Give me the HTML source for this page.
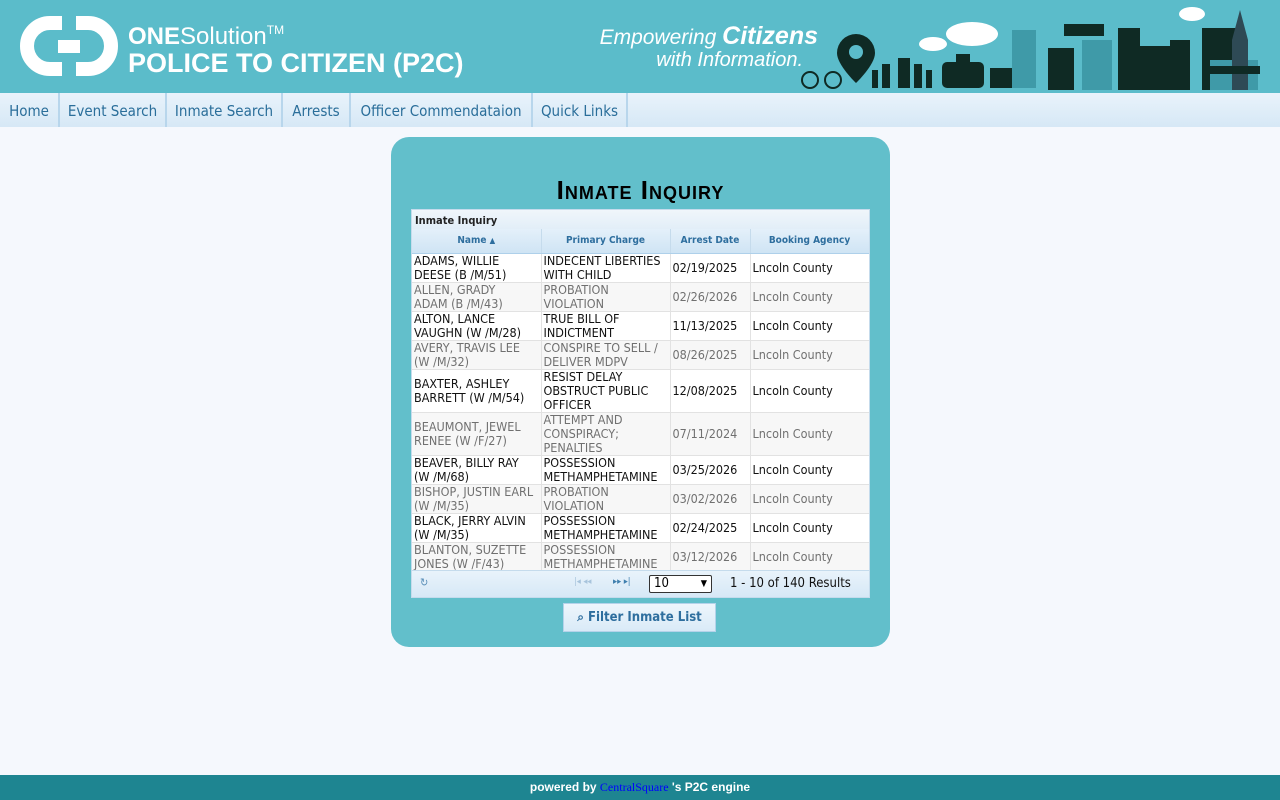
<!DOCTYPE html>
<html><head><meta charset="utf-8"><style>
*{margin:0;padding:0;box-sizing:border-box}
body{width:1280px;height:800px;background:#f5f8fd;font-family:"DejaVu Sans","Liberation Sans",sans-serif;position:relative;overflow:hidden}
#hdr{position:absolute;left:0;top:0;width:1280px;height:93px;background:#5bbcca}
#nav{position:absolute;left:0;top:93px;width:1280px;height:34px;background:linear-gradient(#e9f3fb,#d6e8f6)}
#nav span{position:absolute;top:0;height:34px;line-height:36px;font-size:15px;color:#2a6e9a;font-family:"DejaVu Sans Condensed","Liberation Sans",sans-serif;text-align:center;border-right:2px solid #b8d6ec}
#panel{position:absolute;left:391px;top:137px;width:499px;height:510px;background:#62bfcb;border-radius:18px}
h1{position:absolute;left:391px;width:499px;top:175px;text-align:center;font:bold 26px "Liberation Sans",sans-serif;font-variant:small-caps;color:#000;letter-spacing:1px}
#grid{position:absolute;left:411px;top:209px;width:459px;height:389px;background:#fff;border:1px solid #c5dbec;overflow:hidden}
#cap{height:19px;background:linear-gradient(#f0f6fb,#e2eef8);font:bold 11px "DejaVu Sans Condensed","DejaVu Sans",sans-serif;padding:4px 3px;color:#222}
table{border-collapse:collapse;width:457px;table-layout:fixed}
th{height:24px;background:linear-gradient(#e4f0fa,#cfe4f4);font:bold 10px "DejaVu Sans Condensed","DejaVu Sans",sans-serif;color:#2e6e9e;border-right:1px solid #c5dbec;border-bottom:1px solid #aed0ea}
td{font-family:"DejaVu Sans Condensed","DejaVu Sans",sans-serif;font-size:12.5px;line-height:14px;padding:0 2px;color:#111;border-right:1px solid #e2e2e2;border-bottom:1px solid #e2e2e2;vertical-align:middle;overflow:hidden;white-space:nowrap}
tr.a td{color:#707070;background:#f7f7f7}
#pg{position:absolute;left:0;top:360px;width:457px;height:27px;background:linear-gradient(#e9f3fb,#d6e8f6);border-top:1px solid #c5dbec;font-size:12.5px;font-family:"DejaVu Sans Condensed","DejaVu Sans",sans-serif}
#btn{position:absolute;left:563px;top:603px;width:153px;height:29px;background:linear-gradient(#eef6fc,#d9eaf7);border:1px solid #b5d3ea;font:bold 13px "DejaVu Sans Condensed","DejaVu Sans",sans-serif;color:#2e6e9e;line-height:27px;text-align:center}
#ft{position:absolute;left:0;top:775px;width:1280px;height:25px;background:#1e8591;color:#fff;font:bold 12px "Liberation Sans",sans-serif;text-align:center;line-height:25px}
</style></head><body>
<div id="hdr">
<svg width="1280" height="93" style="position:absolute;left:0;top:0">
<path d="M62 23 H50 A23 23 0 0 0 50 69 H62" fill="none" stroke="#fff" stroke-width="14"/>
<path d="M76 23 H88 A23 23 0 0 1 88 69 H76" fill="none" stroke="#fff" stroke-width="14"/>
<rect x="58" y="40" width="22" height="13" fill="#fff"/>
<text x="128" y="44" fill="#fff" font-family="Liberation Sans" font-size="24"><tspan font-weight="bold">ONE</tspan>Solution<tspan font-size="12" dy="-10">TM</tspan></text>
<text x="128" y="72" fill="#fff" font-family="Liberation Sans" font-weight="bold" font-size="27">POLICE TO CITIZEN (P2C)</text>
<text x="818" y="44" text-anchor="end" fill="#fff" font-family="Liberation Sans" font-style="italic" font-size="21">Empowering <tspan font-weight="bold" font-size="25">Citizens</tspan></text>
<text x="803" y="66" text-anchor="end" fill="#fff" font-family="Liberation Sans" font-style="italic" font-size="20">with Information.</text>
<g fill="#0f2a24">
<circle cx="810" cy="80" r="8" fill="none" stroke="#0f2a24" stroke-width="2"/><circle cx="833" cy="80" r="8" fill="none" stroke="#0f2a24" stroke-width="2"/>
<path d="M856 34a19 19 0 0 1 19 19c0 12-19 30-19 30s-19-18-19-30a19 19 0 0 1 19-19z"/><circle cx="856" cy="52" r="7" fill="#5bbcca"/>
<rect x="872" y="70" width="6" height="18"/><rect x="882" y="64" width="8" height="24"/><rect x="898" y="58" width="12" height="30"/><rect x="914" y="64" width="8" height="24"/><rect x="926" y="70" width="6" height="18"/>
<rect x="942" y="62" width="42" height="26" rx="5"/><rect x="956" y="54" width="14" height="8"/>
<path d="M990 88V68h30l8 10v10z"/>
<rect x="1048" y="48" width="26" height="42"/><rect x="1064" y="24" width="40" height="12"/>
<rect x="1118" y="28" width="22" height="62"/><rect x="1140" y="46" width="40" height="44"/><rect x="1170" y="40" width="20" height="50"/>
<rect x="1202" y="28" width="34" height="62"/>
</g>
<g fill="#3f9aa8"><rect x="1012" y="30" width="24" height="58"/><rect x="1082" y="40" width="30" height="50"/><rect x="1210" y="60" width="48" height="30"/></g>
<path d="M1232 40l8-30 8 30v50h-16z" fill="#2e4a55"/>
<path d="M1210 66h50v8h-50z" fill="#0f2a24"/>
<g fill="#fff"><ellipse cx="972" cy="34" rx="26" ry="12"/><ellipse cx="933" cy="44" rx="14" ry="7"/><ellipse cx="1192" cy="14" rx="13" ry="7"/></g>
</svg>
</div>
<div id="nav">
<span style="left:0;width:60px">Home</span>
<span style="left:60px;width:107px">Event Search</span>
<span style="left:167px;width:116px">Inmate Search</span>
<span style="left:283px;width:68px">Arrests</span>
<span style="left:351px;width:182px">Officer Commendataion</span>
<span style="left:533px;width:95px">Quick Links</span>
</div>
<div id="panel"></div>
<h1>Inmate Inquiry</h1>
<div id="grid">
<div id="cap">Inmate Inquiry</div>
<table>
<colgroup><col style="width:129px"><col style="width:129px"><col style="width:80px"><col style="width:119px"></colgroup>
<tr><th>Name <span style="font-size:8px">▲</span></th><th>Primary Charge</th><th>Arrest Date</th><th>Booking Agency</th></tr>
<tr style="height:29px"><td>ADAMS, WILLIE<br>DEESE (B /M/51)</td><td>INDECENT LIBERTIES<br>WITH CHILD</td><td>02/19/2025</td><td>Lncoln County</td></tr>
<tr class="a" style="height:29px"><td>ALLEN, GRADY<br>ADAM (B /M/43)</td><td>PROBATION<br>VIOLATION</td><td>02/26/2026</td><td>Lncoln County</td></tr>
<tr style="height:29px"><td>ALTON, LANCE<br>VAUGHN (W /M/28)</td><td>TRUE BILL OF<br>INDICTMENT</td><td>11/13/2025</td><td>Lncoln County</td></tr>
<tr class="a" style="height:29px"><td>AVERY, TRAVIS LEE<br>(W /M/32)</td><td>CONSPIRE TO SELL /<br>DELIVER MDPV</td><td>08/26/2025</td><td>Lncoln County</td></tr>
<tr style="height:43px"><td>BAXTER, ASHLEY<br>BARRETT (W /M/54)</td><td>RESIST DELAY<br>OBSTRUCT PUBLIC<br>OFFICER</td><td>12/08/2025</td><td>Lncoln County</td></tr>
<tr class="a" style="height:43px"><td>BEAUMONT, JEWEL<br>RENEE (W /F/27)</td><td>ATTEMPT AND<br>CONSPIRACY;<br>PENALTIES</td><td>07/11/2024</td><td>Lncoln County</td></tr>
<tr style="height:29px"><td>BEAVER, BILLY RAY<br>(W /M/68)</td><td>POSSESSION<br>METHAMPHETAMINE</td><td>03/25/2026</td><td>Lncoln County</td></tr>
<tr class="a" style="height:29px"><td>BISHOP, JUSTIN EARL<br>(W /M/35)</td><td>PROBATION<br>VIOLATION</td><td>03/02/2026</td><td>Lncoln County</td></tr>
<tr style="height:29px"><td>BLACK, JERRY ALVIN<br>(W /M/35)</td><td>POSSESSION<br>METHAMPHETAMINE</td><td>02/24/2025</td><td>Lncoln County</td></tr>
<tr class="a" style="height:29px"><td>BLANTON, SUZETTE<br>JONES (W /F/43)</td><td>POSSESSION<br>METHAMPHETAMINE</td><td>03/12/2026</td><td>Lncoln County</td></tr>
</table>
<div id="pg">
<span style="position:absolute;left:8px;top:5px;color:#5a8fb8;font-size:11px">↻</span>
<span style="position:absolute;left:162px;top:6px;color:#a8c4dc;font-size:9px">|◂ ◂◂</span>
<span style="position:absolute;left:201px;top:6px;color:#3f7fae;font-size:9px">▸▸ ▸|</span>
<div style="position:absolute;left:237px;top:4px;width:63px;height:18px;border:1px solid #333;border-radius:2px;background:#fff;font-size:13px;padding-left:4px;line-height:16px">10<span style="position:absolute;right:4px;font-size:9px">▼</span></div>
<span style="position:absolute;left:318px;top:5px;color:#111;font-size:13px">1 - 10 of 140 Results</span>
</div>
</div>
<div id="btn"><span style="font-size:12px">⌕</span> Filter Inmate List</div>
<div id="ft">powered by <span style="color:#00f;font-family:'Liberation Serif',serif;font-weight:normal">CentralSquare</span> 's P2C engine</div>
</body></html>
